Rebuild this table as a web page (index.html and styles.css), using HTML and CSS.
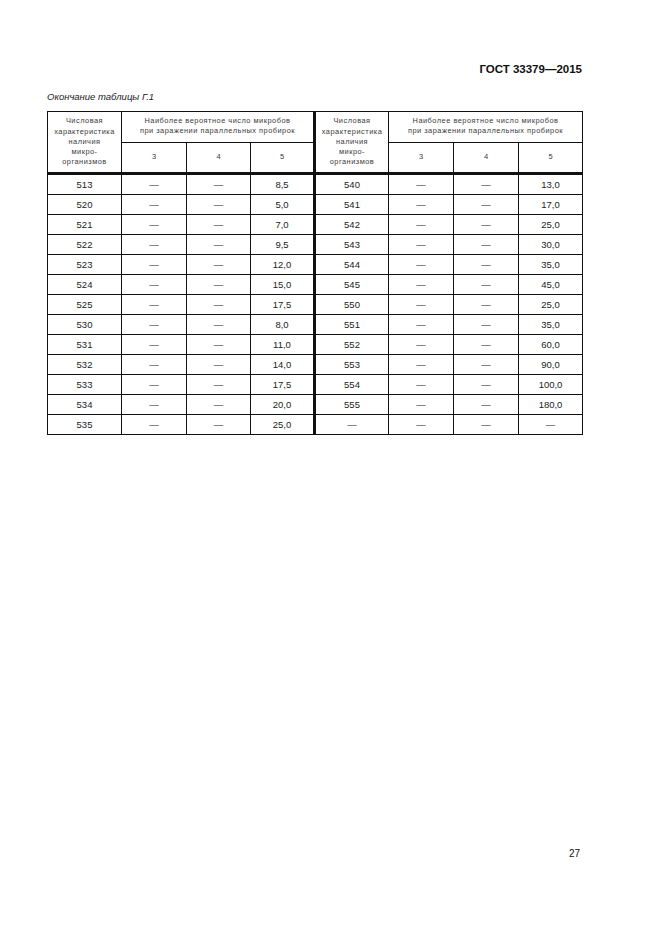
FILE: index.html
```html
<!DOCTYPE html>
<html lang="ru">
<head>
<meta charset="utf-8">
<title>ГОСТ 33379—2015</title>
<link rel="stylesheet" href="styles.css">
</head>
<body>
<div class="page">
  <div class="doc-code">ГОСТ 33379—2015</div>
  <div class="caption">Окончание таблицы Г.1</div>
  <table class="tbl">
    <colgroup>
      <col class="c1"><col class="c2"><col class="c3"><col class="c4">
      <col class="c5"><col class="c6"><col class="c7"><col class="c8">
    </colgroup>
    <thead>
      <tr class="h1">
        <th rowspan="2" class="hname">Числовая<br>характеристика<br>наличия<br>микро-<br>организмов</th>
        <th colspan="3" class="hgroup">Наиболее вероятное число микробов<br>при заражении параллельных пробирок</th>
        <th rowspan="2" class="hname split">Числовая<br>характеристика<br>наличия<br>микро-<br>организмов</th>
        <th colspan="3" class="hgroup">Наиболее вероятное число микробов<br>при заражении параллельных пробирок</th>
      </tr>
      <tr class="h2">
        <th>3</th><th>4</th><th>5</th>
        <th>3</th><th>4</th><th>5</th>
      </tr>
    </thead>
    <tbody>
      <tr><td>513</td><td>—</td><td>—</td><td>8,5</td><td class="split">540</td><td>—</td><td>—</td><td>13,0</td></tr>
      <tr><td>520</td><td>—</td><td>—</td><td>5,0</td><td class="split">541</td><td>—</td><td>—</td><td>17,0</td></tr>
      <tr><td>521</td><td>—</td><td>—</td><td>7,0</td><td class="split">542</td><td>—</td><td>—</td><td>25,0</td></tr>
      <tr><td>522</td><td>—</td><td>—</td><td>9,5</td><td class="split">543</td><td>—</td><td>—</td><td>30,0</td></tr>
      <tr><td>523</td><td>—</td><td>—</td><td>12,0</td><td class="split">544</td><td>—</td><td>—</td><td>35,0</td></tr>
      <tr><td>524</td><td>—</td><td>—</td><td>15,0</td><td class="split">545</td><td>—</td><td>—</td><td>45,0</td></tr>
      <tr><td>525</td><td>—</td><td>—</td><td>17,5</td><td class="split">550</td><td>—</td><td>—</td><td>25,0</td></tr>
      <tr><td>530</td><td>—</td><td>—</td><td>8,0</td><td class="split">551</td><td>—</td><td>—</td><td>35,0</td></tr>
      <tr><td>531</td><td>—</td><td>—</td><td>11,0</td><td class="split">552</td><td>—</td><td>—</td><td>60,0</td></tr>
      <tr><td>532</td><td>—</td><td>—</td><td>14,0</td><td class="split">553</td><td>—</td><td>—</td><td>90,0</td></tr>
      <tr><td>533</td><td>—</td><td>—</td><td>17,5</td><td class="split">554</td><td>—</td><td>—</td><td>100,0</td></tr>
      <tr><td>534</td><td>—</td><td>—</td><td>20,0</td><td class="split">555</td><td>—</td><td>—</td><td>180,0</td></tr>
      <tr><td>535</td><td>—</td><td>—</td><td>25,0</td><td class="split">—</td><td>—</td><td>—</td><td>—</td></tr>
    </tbody>
  </table>
  <div class="page-num">27</div>
</div>
</body>
</html>
```

FILE: styles.css
```css
html, body {
  margin: 0;
  padding: 0;
  background: #fff;
}

body {
  font-family: "Liberation Sans", Arial, sans-serif;
  color: #1a1a1a;
}

.page {
  width: 535px;
  margin-left: 47px;
  padding-top: 62px;
}

.doc-code {
  text-align: right;
  font-weight: bold;
  font-size: 11.5px;
  line-height: 14px;
  color: #111;
}

.caption {
  margin-top: 15px;
  font-style: italic;
  font-size: 9.5px;
  line-height: 12px;
  color: #222;
}

.tbl {
  margin-top: 8px;
  border-collapse: collapse;
  table-layout: fixed;
  width: 536px;
  border: 1px solid #111;
}

.c1 { width: 74px; }
.c2 { width: 65px; }
.c3 { width: 64px; }
.c4 { width: 64px; }
.c5 { width: 74px; }
.c6 { width: 65px; }
.c7 { width: 65px; }
.c8 { width: 64px; }

.tbl th,
.tbl td {
  border: 1px solid #111;
  text-align: center;
  padding: 0;
  font-weight: normal;
}

.tbl th {
  font-size: 7.4px;
  letter-spacing: 0.5px;
  color: #3a3a3a;
  line-height: 10.3px;
}

.tbl .h1 { height: 31px; }
.tbl .h2 { height: 31px; }

.tbl .h2 th {
  font-size: 7.5px;
  letter-spacing: 0;
}

.tbl thead tr:last-child th,
.tbl .hname {
  border-bottom: 3px solid #111;
}

.tbl .hgroup {
  vertical-align: middle;
  padding-bottom: 2px;
}

.tbl td {
  height: 19px;
  font-size: 9.5px;
  color: #222;
  line-height: 12px;
}

.tbl .split {
  border-left: 3px solid #111;
}

.page-num {
  margin-top: 413px;
  text-align: right;
  font-size: 10px;
  line-height: 12px;
  padding-right: 2px;
  color: #111;
}
```
